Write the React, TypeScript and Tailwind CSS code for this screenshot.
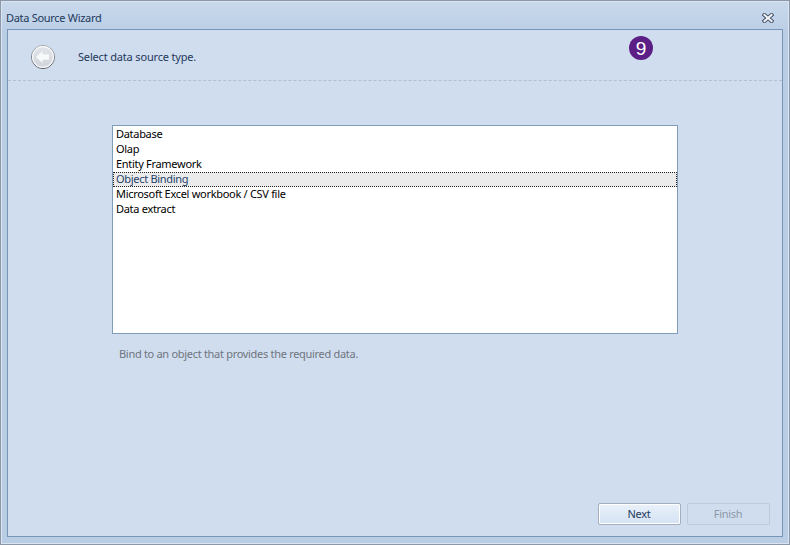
import * as React from "react";

const ITEMS = [
  "Database",
  "Olap",
  "Entity Framework",
  "Object Binding",
  "Microsoft Excel workbook / CSV file",
  "Data extract",
];

function BackIcon() {
  return (
    <svg width="26" height="26" viewBox="0 0 26 26">
      <defs>
        <linearGradient id="rim" x1="0" y1="0" x2="0" y2="1">
          <stop offset="0" stopColor="#a4a7ac" />
          <stop offset="1" stopColor="#4f5258" />
        </linearGradient>
        <linearGradient id="face" x1="0" y1="0" x2="0" y2="1">
          <stop offset="0" stopColor="#e2e5e9" />
          <stop offset="1" stopColor="#d0d4da" />
        </linearGradient>
      </defs>
      <circle cx="13" cy="13" r="11.5" fill="url(#face)" stroke="url(#rim)" strokeWidth="1" />
      <circle cx="13" cy="13" r="10.4" fill="none" stroke="#f7f8fa" strokeWidth="1.2" />
      <path d="M6 13 L12.5 7 V10.2 H19 V15.8 H12.5 V19 Z" fill="#f8f9fa" />
    </svg>
  );
}

function CloseIcon() {
  return (
    <svg width="12" height="10" viewBox="0 0 12 10">
      <path d="M2.5 2 L9.5 8 M9.5 2 L2.5 8" stroke="#46536a" strokeWidth="4" strokeLinecap="square" />
      <path d="M2.5 2 L9.5 8 M9.5 2 L2.5 8" stroke="#f4f6f9" strokeWidth="2" strokeLinecap="square" />
    </svg>
  );
}

export default function App() {
  return (
    <div className="w-[790px] h-[545px] border border-[#8c98a8] bg-[#bccfe6] font-['Noto_Sans','DejaVu_Sans',sans-serif] text-[11px] tracking-[-0.3px] text-[#1e395b] overflow-hidden">
      <div className="flex h-full flex-col border border-[#dbe5f2] bg-gradient-to-b from-[#c9d9ec] from-0% to-[#b9cde5] to-[6%]">
        <div className="flex h-[27px] items-center justify-between pl-[4px] pr-[14px] pt-[5px]">
          <span>Data Source Wizard</span>
          <CloseIcon />
        </div>
        <div className="mb-[6px] ml-[5px] mr-[5px] flex flex-1 flex-col border border-[#7793b5] bg-[#d0ddee]">
          <div className="relative flex h-[51px] items-center border-b border-dashed border-[#b4bfcc] pl-[22px] pt-[4px]">
            <BackIcon />
            <span className="ml-[22px] mt-[1px] tracking-[-0.17px]">Select data source type.</span>
            <div className="absolute left-[621px] top-[6px] flex h-6 w-6 items-center justify-center rounded-full bg-[#5c1f86] font-['Liberation_Sans',sans-serif] text-[19px] leading-none tracking-normal text-white">
              9
            </div>
          </div>
          <div className="ml-[104px] mt-[44px] h-[209px] w-[566px] border border-[#7f9db9] bg-white py-[1px]">
            {ITEMS.map((item) =>
              item === "Object Binding" ? (
                <div
                  key={item}
                  className="flex h-[15px] items-center border border-dotted border-[#222] bg-[#ebebeb] pl-[2px] text-[#25406a]"
                >
                  {item}
                </div>
              ) : (
                <div key={item} className="flex h-[15px] items-center pl-[3px] text-black">
                  {item}
                </div>
              ),
            )}
          </div>
          <div className="ml-[111px] mt-[12px] text-[#6f7580]">
            Bind to an object that provides the required data.
          </div>
          <div className="mt-auto mb-[11px] mr-[12px] flex justify-end gap-[6px]">
            <div className="flex h-[22px] w-[83px] items-center justify-center rounded-[2px] border border-[#a3aec4] bg-gradient-to-b from-[#eaf1fa] to-[#d4e2f3] pr-[1px] text-[#1e395b] shadow-[inset_0_0_0_1px_#ffffff]">
              Next
            </div>
            <div className="flex h-[22px] w-[83px] items-center justify-center rounded-[2px] border border-[#bccadb] pr-[1px] text-[#8d99a8]">
              Finish
            </div>
          </div>
        </div>
      </div>
    </div>
  );
}
